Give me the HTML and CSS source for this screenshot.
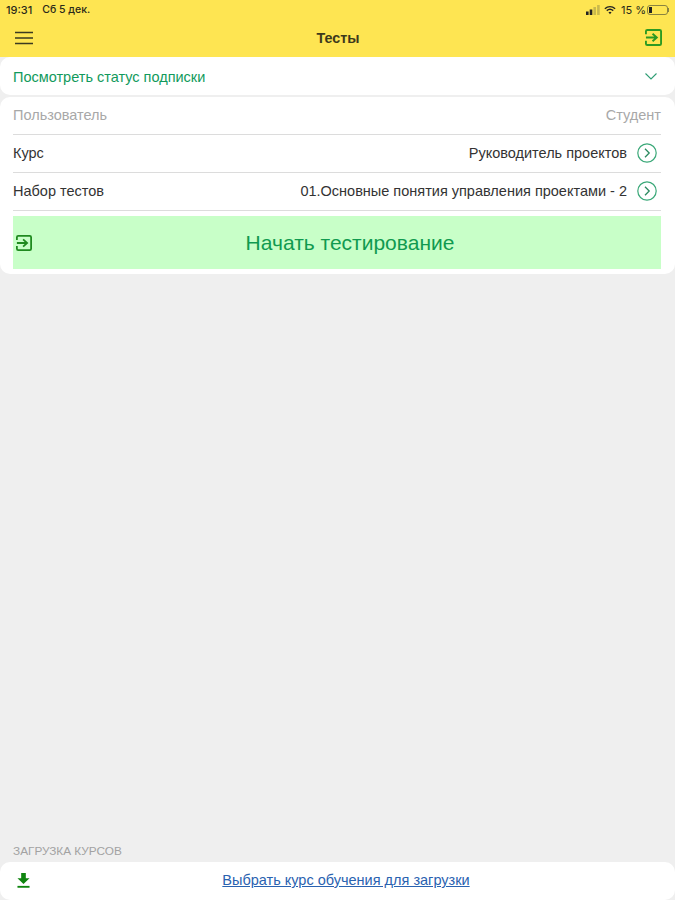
FILE: index.html
```html
<!DOCTYPE html>
<html lang="ru">
<head>
    <meta charset="UTF-8">
    <meta name="viewport" content="width=device-width, initial-scale=1.0">
    <title>Тесты</title>
    <link rel="stylesheet" href="styles.css">
</head>
<body>

<div class="screen">
    <header class="topbar">
        <div class="status">
            <span class="status-time">19:31</span>
            <span class="status-date">Сб 5 дек.</span>
            <span class="status-right">
                <svg class="signal" width="14" height="10" viewBox="0 0 14 10">
                    <rect x="0" y="6.500" width="2.600" height="3.500" fill="#222"/>
                    <rect x="3.700" y="4.500" width="2.600" height="5.500" fill="#222"/>
                    <rect x="7.400" y="2" width="2.600" height="8" fill="#c9b94c"/>
                    <rect x="11.100" y="0" width="2.600" height="10" fill="#c9b94c"/>
                </svg>
                <svg class="wifi" width="12" height="10" viewBox="0 0 14 11">
                    <path d="M1 4 C4.500 0.800 9.500 0.800 13 4" fill="none" stroke="#222" stroke-width="1.600"/>
                    <path d="M3.200 6.200 C5.500 4.300 8.500 4.300 10.800 6.200" fill="none" stroke="#222" stroke-width="1.600"/>
                    <path d="M5.200 8.200 L7 10.500 L8.800 8.200 C7.700 7.300 6.300 7.300 5.200 8.200 Z" fill="#222"/>
                </svg>
                <span class="status-pct">15 %</span>
                <span class="battery"><span class="battery-level"></span></span>
                <span class="battery-nub"></span>
            </span>
        </div>
        <div class="navbar">
            <svg class="menu-icon" width="20" height="14" viewBox="0 0 20 14">
                <path d="M1 1.500 H19 M1 7 H19 M1 12.500 H19" stroke="#3b3a20" stroke-width="1.500" fill="none"/>
            </svg>
            <h1 class="title">Тесты</h1>
            <svg class="exit-icon" width="17" height="17" viewBox="0 0 18 18">
                <path d="M1 5.500 V2.500 Q1 1 2.500 1 H15.500 Q17 1 17 2.500 V15.500 Q17 17 15.500 17 H2.500 Q1 17 1 15.500 V12.500" fill="none" stroke="#2c9a22" stroke-width="2"/>
                <path d="M1 9 H12 M8 5 L12.500 9 L8 13" fill="none" stroke="#2c9a22" stroke-width="2"/>
            </svg>
        </div>
    </header>

    <section class="card sub-card">
        <span class="sub-link">Посмотреть статус подписки</span>
        <svg width="12" height="7" viewBox="0 0 12 7">
            <path d="M0.500 0.500 L6 6 L11.500 0.500" fill="none" stroke="#2f9e75" stroke-width="1.100"/>
        </svg>
    </section>

    <section class="card form-card">
        <div class="row">
            <span class="row-label muted">Пользователь</span>
            <span class="row-value muted">Студент</span>
        </div>
        <div class="row">
            <span class="row-label">Курс</span>
            <span class="row-value">Руководитель проектов</span>
            <svg class="go-icon" width="20" height="20" viewBox="0 0 20 20">
                <circle cx="10" cy="10" r="9.200" fill="none" stroke="#3aa878" stroke-width="1.200"/>
                <path d="M8 5.800 L12.200 10 L8 14.200" fill="none" stroke="#2c8a60" stroke-width="1.300"/>
            </svg>
        </div>
        <div class="row">
            <span class="row-label">Набор тестов</span>
            <span class="row-value">01.Основные понятия управления проектами - 2</span>
            <svg class="go-icon" width="20" height="20" viewBox="0 0 20 20">
                <circle cx="10" cy="10" r="9.200" fill="none" stroke="#3aa878" stroke-width="1.200"/>
                <path d="M8 5.800 L12.200 10 L8 14.200" fill="none" stroke="#2c8a60" stroke-width="1.300"/>
            </svg>
        </div>
        <button class="start-btn" type="button">
            <svg class="start-icon" width="16" height="16" viewBox="0 0 18 18">
                <path d="M1 5.500 V2.500 Q1 1 2.500 1 H15.500 Q17 1 17 2.500 V15.500 Q17 17 15.500 17 H2.500 Q1 17 1 15.500 V12.500" fill="none" stroke="#1f8a1f" stroke-width="2"/>
                <path d="M1 9 H12 M8 5 L12.500 9 L8 13" fill="none" stroke="#1f8a1f" stroke-width="2"/>
            </svg>
            <span class="start-text">Начать тестирование</span>
        </button>
    </section>

    <div class="spacer"></div>

    <div class="section-caption">ЗАГРУЗКА КУРСОВ</div>
    <section class="card load-card">
        <svg class="load-icon" width="13" height="15" viewBox="0 0 14 16">
            <path d="M4.500 0 H9.500 V5.500 H13.500 L7 11.800 L0.500 5.500 H4.500 Z" fill="#0f850f"/>
            <rect x="0.500" y="13.800" width="13" height="2" fill="#0f850f"/>
        </svg>
        <a class="load-link" href="#">Выбрать курс обучения для загрузки</a>
    </section>
</div>

</body>
</html>
```

FILE: styles.css
```css
body {
    font-family: "Liberation Sans", Arial, sans-serif;
    background-color: #efefef;
    margin: 0;
    color: #333;
}
.screen {
    display: flex;
    flex-direction: column;
    height: 900px;
    overflow: hidden;
}
.topbar {
    background-color: #fee552;
    height: 57px;
    flex-shrink: 0;
}
.status {
    display: flex;
    align-items: center;
    height: 19px;
    padding: 0 6px;
    font-family: Inter, "Liberation Sans", sans-serif;
    font-size: 11px;
    font-weight: 500;
    color: #2a2a1a;
}
.status-date {
    margin-left: 10px;
    font-size: 10.500px;
}
.status-right {
    margin-left: auto;
    display: flex;
    align-items: center;
}
.wifi {
    margin-left: 4px;
}
.status-pct {
    margin-left: 5px;
    margin-right: 1px;
    font-size: 11px;
    font-weight: 400;
}
.battery {
    display: block;
    width: 21px;
    height: 10px;
    border: 1px solid #8a8340;
    border-radius: 3px;
    padding: 1px;
    box-sizing: border-box;
}
.battery-level {
    display: block;
    width: 3px;
    height: 100%;
    background-color: #222;
}
.battery-nub {
    display: block;
    width: 1px;
    height: 4px;
    background-color: #8a8340;
}
.navbar {
    display: flex;
    align-items: center;
    justify-content: space-between;
    height: 37px;
    padding: 0 13px 0 14px;
}
.title {
    margin: 0 3px 0 0;
    font-size: 14.300px;
    font-weight: bold;
    color: #3d3a1c;
}
.card {
    background-color: #fff;
    border-radius: 10px;
}
.sub-card {
    display: flex;
    align-items: center;
    justify-content: space-between;
    height: 38px;
    padding: 0 18px 0 13px;
    flex-shrink: 0;
}
.sub-link {
    font-size: 14.500px;
    color: #129a5c;
    padding-top: 2px;
}
.form-card {
    margin-top: 2px;
    padding: 0 14px 5px 13px;
    flex-shrink: 0;
}
.row {
    display: flex;
    align-items: center;
    height: 36px;
    padding-bottom: 1px;
    border-bottom: 1px solid #dcdcdc;
    font-size: 14.500px;
}
.row-label {
    margin-right: auto;
}
.row-value {
    color: #333;
}
.muted, .row-value.muted {
    color: #a8a8a8;
}
.go-icon {
    margin-left: 10px;
    margin-right: 4px;
}
.start-btn {
    display: flex;
    align-items: center;
    width: 100%;
    height: 53px;
    margin-top: 5px;
    padding: 0 0 0 3px;
    border: none;
    background-color: #c8ffc8;
    font-family: inherit;
    cursor: pointer;
}
.start-text {
    flex: 1;
    font-size: 21px;
    color: #109a50;
    padding-left: 7px;
}
.spacer {
    flex: 1;
}
.section-caption {
    padding-left: 13px;
    font-size: 11.800px;
    color: #a2a2a2;
    margin-bottom: 4px;
}
.load-card {
    display: flex;
    align-items: center;
    height: 38px;
    padding-left: 17px;
    flex-shrink: 0;
}
.load-icon {
    margin-bottom: 2px;
}
.load-link {
    flex: 1;
    text-align: center;
    font-size: 14.500px;
    color: #2a62b0;
    padding-right: 13px;
    padding-bottom: 2px;
}
```
